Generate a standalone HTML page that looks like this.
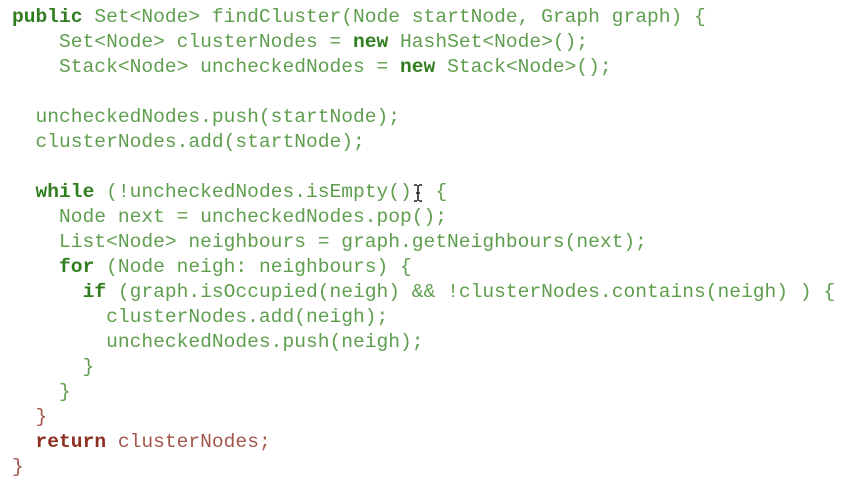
<!DOCTYPE html>
<html><head><meta charset="utf-8"><style>
html,body{margin:0;padding:0;background:#fff;width:845px;height:479px;overflow:hidden}
pre{margin:0;position:absolute;left:12px;top:5px;font-family:"Liberation Mono",monospace;font-size:19.6px;line-height:25px;color:#5f9e4e}
b{color:#317d20}
.r{color:#a4564c}
.r b{color:#8e2f22}
.cur{display:inline-block;width:11.75px;position:relative;vertical-align:top;height:25px}
.cur svg{position:absolute;left:1px;top:4px}
</style></head><body>
<pre><b>public</b> Set&lt;Node&gt; findCluster(Node startNode, Graph graph) {
    Set&lt;Node&gt; clusterNodes = <b>new</b> HashSet&lt;Node&gt;();
    Stack&lt;Node&gt; uncheckedNodes = <b>new</b> Stack&lt;Node&gt;();

  uncheckedNodes.push(startNode);
  clusterNodes.add(startNode);

  <b>while</b> (!uncheckedNodes.isEmpty()<span class="cur"><svg width="10" height="18" viewBox="0 0 10 18"><path d="M1 1h3M6 1h3M5 1v16M1 17h3M6 17h3M3 9h4" stroke="#222" stroke-width="1.6" fill="none"/></svg></span> {
    Node next = uncheckedNodes.pop();
    List&lt;Node&gt; neighbours = graph.getNeighbours(next);
    <b>for</b> (Node neigh: neighbours) {
      <b>if</b> (graph.isOccupied(neigh) &amp;&amp; !clusterNodes.contains(neigh) ) {
        clusterNodes.add(neigh);
        uncheckedNodes.push(neigh);
      }
    }
<span class="r">  }
  <b>return</b> clusterNodes;
}</span></pre>
</body></html>
